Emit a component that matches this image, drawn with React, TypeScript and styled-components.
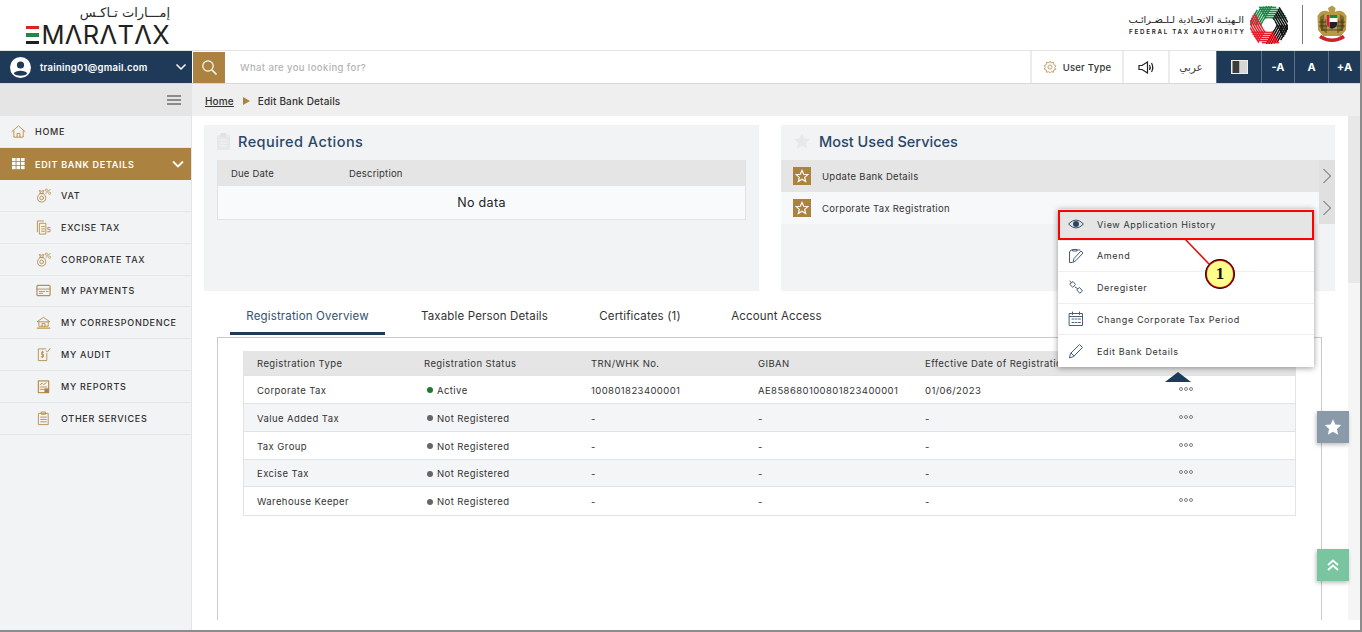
import React from 'react';
import styled, { createGlobalStyle } from 'styled-components';

const navy = '#1f3a58';
const gold = '#ab823f';
const font = `"Inter", "Liberation Sans", sans-serif`;

const Global = createGlobalStyle`
  html, body { margin: 0; padding: 0; height: 632px; overflow: hidden; background: #fff; }
  * { box-sizing: border-box; }
  body { font-family: ${font}; color: #2b2b2b; -webkit-font-smoothing: antialiased; }
`;

const Page = styled.div`
  position: relative; width: 1362px; height: 632px; overflow: hidden;
  border-right: 2px solid #8c8c8c; border-bottom: 2px solid #8c8c8c;
`;
const Header = styled.header`
  height: 51px; display: flex; justify-content: space-between; align-items: flex-start;
  border-bottom: 1px solid #e3e3e3; padding: 5px 13px 0 25px;
`;
const Brand = styled.div`display: flex; flex-direction: column; align-items: flex-end; width: 145px;`;
const BrandArabic = styled.div`
  font-family: "DejaVu Sans", sans-serif; font-size: 13px; line-height: 15px; color: #2b2b2b; direction: rtl;
`;
const BrandWord = styled.div`
  display: flex; align-items: center; height: 22px; margin-top: 4px; font-family: "Inter", sans-serif; font-weight: 400;
  font-size: 25.5px; line-height: 22px; letter-spacing: .35px; color: #231f20; white-space: nowrap;
`;
const BrandE = styled.span`
  display: inline-flex; flex-direction: column; justify-content: space-between; width: 13px; height: 19px; margin-right: 2px;
`;
const EBar = styled.i<{ $c: string }>`display: block; height: 3.4px; background: ${p => p.$c};`;
const Authority = styled.div`display: flex; align-items: center; height: 39px;`;
const AuthorityText = styled.div`display: flex; flex-direction: column; align-items: flex-end; margin-right: 6px; margin-top: 1px;`;
const AuthorityArabic = styled.div`font-family: "DejaVu Sans", sans-serif; font-size: 9.8px; font-weight: 400; line-height: 13px; color: #222; white-space: nowrap;`;
const AuthorityLatin = styled.div`font-size: 6.2px; font-weight: 600; letter-spacing: 1.75px; margin-right: -1.75px; line-height: 11px; color: #222; white-space: nowrap;`;
const Divider = styled.div`width: 1px; height: 39px; background: #777; margin: 0 14px;`;

const NavBar = styled.nav`height: 33px; display: flex; border-bottom: 1px solid #d8d8d8; background: #fff;`;
const UserBlock = styled.div`
  width: 192px; background: ${navy}; color: #fff; display: flex; align-items: center; padding: 0 5px 0 10px;
  font-size: 9.5px; font-weight: 600; letter-spacing: .25px;
`;
const UserAvatar = styled.span`display: flex; margin-right: 9px;`;
const UserName = styled.span`flex: 1;`;
const SearchBtn = styled.div`width: 32px; margin-left: 1px; margin-top: 1px; background: ${gold}; display: flex; align-items: center; justify-content: center;`;
const SearchText = styled.div`flex: 1; padding-left: 15px; display: flex; align-items: center; font-size: 9.5px; letter-spacing: .4px; color: #b4b4b4; font-weight: 500;`;
const NavItem = styled.div<{ $w: number }>`
  width: ${p => p.$w}px; display: flex; align-items: center; justify-content: center; gap: 6px; border-left: 2px solid #ececec;
  font-size: 9.5px; font-weight: 500; color: #333; letter-spacing: .25px;
`;
const ArabicLabel = styled.span`font-family: "DejaVu Sans", sans-serif; font-size: 10.5px; color: #444; padding-right: 4px;`;
const NavDark = styled.div<{ $w: number }>`
  width: ${p => p.$w}px; background: ${navy}; color: #fff; display: flex; align-items: center; justify-content: center;
  border-left: 1px solid #5c7186; font-size: 11px; font-weight: 700;
`;

const Body = styled.div`display: grid; grid-template-columns: 192px 1fr; height: 546px;`;
const Sidebar = styled.aside`background: #f2f3f5; border-right: 1px solid #e4e4e4;`;
const Burger = styled.div`height: 32px; background: #e5e5e5; display: flex; align-items: center; justify-content: flex-end; padding-right: 10px;`;
const MenuRow = styled.div`
  height: 32px; display: flex; align-items: center; padding-left: 11px; gap: 9px; font-size: 9px; font-weight: 500;
  letter-spacing: .72px; color: #2f2f2f; border-bottom: 1px solid #e6e7e9;
`;
const ActiveRow = styled(MenuRow)`
  background: ${gold}; color: #fff; font-weight: 600; border-bottom: none; padding-right: 6px; letter-spacing: .7px;
`;
const ActiveLabel = styled.span`flex: 1;`;
const SubRow = styled(MenuRow)`height: 31.85px; padding-left: 36px; gap: 10px;`;
const Ico = styled.span`display: flex; width: 15px; justify-content: center; flex: none;`;

const Main = styled.main`position: relative; background: #fff; display: flex; flex-direction: column;`;
const Crumbs = styled.div`
  height: 32px; background: #efefef; display: flex; align-items: center; padding: 1px 0 0 13px; font-size: 10px; color: #333;
  letter-spacing: .15px; font-weight: 500;
`;
const CrumbLink = styled.span`text-decoration: underline;`;
const CrumbArrow = styled.span`margin: 0 8px 0 9px; width: 0; height: 0; border-left: 7px solid ${gold}; border-top: 4px solid transparent; border-bottom: 4px solid transparent;`;
const Content = styled.div`flex: 1; display: flex; min-height: 0;`;
const Column = styled.div`width: 1156px; padding: 9px 0 0 12px; background: #fff;`;
const Scroll = styled.div`width: 12px; background: #f5f5f5; height: 504px;`;
const Thumb = styled.div`height: 167px; background: #e8e8e8;`;
const Panels = styled.div`display: grid; grid-template-columns: 555px 554px; column-gap: 22px;`;
const Panel = styled.section`height: 166px; background: #f2f3f5;`;
const PanelHead = styled.div<{ $pl: number; $ls: number }>`
  height: 35px; display: flex; align-items: center; gap: 8px; padding-left: ${p => p.$pl}px; padding-bottom: 3px;
  font-size: 14.5px; font-weight: 500; color: #2a4767; letter-spacing: ${p => p.$ls}px;
`;
const MiniTable = styled.div`margin: 0 13px; border: 1px solid #dfe2e6; border-top: none; background: #fff;`;
const MiniHead = styled.div`
  height: 26px; background: #e5e5e5; display: grid; grid-template-columns: 118px 1fr; align-items: center; padding: 1px 0 0 13px;
  font-size: 9.5px; letter-spacing: .2px; color: #333; font-weight: 400; border-bottom: 1px solid #dfe4ea;
`;
const NoData = styled.div`height: 33px; display: flex; align-items: center; justify-content: center; font-size: 12.5px; letter-spacing: .35px; font-weight: 400; color: #222; background: #f9fafb;`;
const Service = styled.div<{ $on?: boolean }>`
  height: 32px; display: flex; align-items: center; padding-left: 12px; gap: 11px; font-size: 9.5px; font-weight: 400; letter-spacing: .3px; color: #333;
  background: ${p => p.$on ? '#e5e5e5' : '#f7f8fa'};
`;
const ServiceStar = styled.span`width: 18px; height: 18px; background: ${gold}; display: flex; align-items: center; justify-content: center;`;
const ServiceLabel = styled.span`flex: 1;`;
const ServiceArrow = styled.span`width: 16px; height: 32px; background: #e0e0e0; display: flex; align-items: center; justify-content: center;`;

const Tabs = styled.div`display: flex; height: 46px; padding-left: 26px; align-items: flex-start;`;
const Tab = styled.div<{ $on?: boolean; $w: number }>`
  width: ${p => p.$w}px; height: 44px; padding-top: 8px; display: flex; align-items: center; justify-content: center;
  font-size: 11.5px; font-weight: 400; letter-spacing: .15px; color: ${p => p.$on ? '#34526f' : '#333'};
  border-bottom: 3px solid ${p => p.$on ? navy : 'transparent'};
`;
const Frame = styled.div`margin-left: 13px; width: 1105px; height: 283px; border: 1px solid #c9c9c9; border-bottom: none; padding: 13px 25px 0 25px;`;
const Grid = styled.div`border: 1px solid #e3e3e3; border-top: none;`;
const TRow = styled.div<{ $head?: boolean; $alt?: boolean; $h: number }>`
  height: ${p => p.$h}px; display: grid; grid-template-columns: 167px 167px 167px 167px 254px 1fr; align-items: center; padding: 1px 0 0 13px;
  font-size: 9.5px; letter-spacing: .42px; font-weight: 400; color: #333;
  background: ${p => p.$head ? '#e5e5e5' : p.$alt ? '#f4f5f7' : '#fff'};
  border-bottom: 1px solid #dfe2e6;
  &:last-child { border-bottom: none; }
`;
const Status = styled.span`display: flex; align-items: center; gap: 4px; padding-left: 3px;`;
const Dot = styled.i<{ $c: string }>`width: 6px; height: 6px; border-radius: 50%; background: ${p => p.$c};`;
const More = styled.span`display: flex; gap: 1px; padding-bottom: 3px;`;
const MoreDot = styled.i`width: 4px; height: 4px; border: 1px solid #808080; border-radius: 50%;`;

const Menu = styled.div`
  position: absolute; left: 1058px; top: 209px; width: 256px; background: #fff; box-shadow: 0 1px 6px rgba(0,0,0,.4); z-index: 5;
`;
const MenuItem = styled.div<{ $on?: boolean }>`
  height: 31.6px; display: flex; align-items: center; padding-left: 10px; gap: 13px; font-size: 9px; font-weight: 400; letter-spacing: .62px; color: #333;
  background: ${p => p.$on ? '#e5e5e5' : '#fff'}; border-bottom: 1px solid #eceef1;
  &:last-child { border-bottom: none; }
`;
const Pointer = styled.div`
  position: absolute; left: 1165px; top: 372px; width: 0; height: 0; z-index: 5;
  border-left: 13px solid transparent; border-right: 13px solid transparent; border-bottom: 10px solid ${navy};
`;
const Highlight = styled.div`position: absolute; left: 1058px; top: 210px; width: 256px; height: 30px; border: 2px solid #f00; z-index: 6;`;
const Leader = styled.svg`position: absolute; left: 1180px; top: 238px; z-index: 6;`;
const Callout = styled.div`
  position: absolute; left: 1205px; top: 259px; width: 30px; height: 30px; border-radius: 50%; background: #ffff8a; border: 2px solid #e01010;
  outline: 1px solid #111; outline-offset: -1px;
  display: flex; align-items: center; justify-content: center; font-family: "Liberation Serif", serif; font-size: 17px; font-weight: 700; color: #111; z-index: 7;
`;
const Float = styled.div<{ $top: number; $bg: string }>`
  position: absolute; left: 1317px; top: ${p => p.$top}px; width: 32px; height: 32px; background: ${p => p.$bg};
  box-shadow: -1px 2px 4px rgba(0,0,0,.25); display: flex; align-items: center; justify-content: center; z-index: 4;
`;

const stroke = { fill: 'none', stroke: '#b8924f', strokeWidth: 1, strokeLinecap: 'round' as const, strokeLinejoin: 'round' as const };
const I = ({ children, w = 15, h = 15, v = '0 0 16 16' }: { children: React.ReactNode; w?: number; h?: number; v?: string }) => (
  <Ico><svg width={w} height={h} viewBox={v}>{children}</svg></Ico>
);
const Bag = () => (
  <I>
    <g {...stroke}>
      <path d="M4 6 C.5 8.5 .5 15 6 15 S11.5 8.5 8 6 Z" />
      <path d="M3.8 3 L5 5.8 M8.2 3 L7 5.8 M3.8 3 Q6 4 8.2 3 M4 6 H8" />
      <circle cx="6" cy="10.6" r="2" />
      <path d="M10.5 6 L15 1.5" />
    </g>
    <circle cx="11" cy="2.2" r="1.2" fill="none" stroke="#b8924f" strokeWidth=".8" />
    <circle cx="14.6" cy="5.6" r="1.2" fill="none" stroke="#b8924f" strokeWidth=".8" />
  </I>
);
const Emblem = () => (
  <svg width="30" height="39" viewBox="0 0 30 39">
    <path d="M15 .5 L18.5 3 L18 7 C22 4.5 27 6 29.5 11 L29 25 L24 31 L6 31 L1 25 L.5 11 C3 6 8 4.5 12 7 L11 3 Z" fill="#b79a45" />
    <path d="M3 12 L7 9 L8 27 L3 23 Z M27 12 L23 9 L22 27 L27 23 Z" fill="#7d6a2c" />
    <path d="M2 17 H28 M2 21 H28 M4 25 H26 M5 14 V26 M9 14 V28 M21 14 V28 M25 14 V26" stroke="#3f3414" strokeWidth=".8" />
    <path d="M9.5 10 H20.5 V18 Q20.5 22 15 24 Q9.5 22 9.5 18 Z" fill="#fff" />
    <path d="M12.5 10 H20.5 V13 H12.5 Z" fill="#1c8a3e" />
    <path d="M12.5 17 H20.5 V18 Q20.5 22 15 24 L12.5 23 Z" fill="#222" />
    <path d="M9.5 10 H12.5 V23 Q9.5 21 9.5 18 Z" fill="#d2202a" />
    <path d="M4 30 Q15 37 26 30 L28 33 Q15 41 2 33 Z" fill="#c8242b" />
  </svg>
);
const ringStripes = [7.2, 9.3, 11.4, 13.5, 15.6, 17.6];
const Ring = () => {
  const segs = [
    { r: 300, c: '#1b8a46' }, { r: 0, c: '#1b8a46' }, { r: 60, c: '#111' }, { r: 120, c: '#111' }, { r: 180, c: '#e31e2d' }, { r: 240, c: '#e31e2d' },
  ];
  return (
    <svg width="38" height="38" viewBox="-19 -19 38 38">
      {segs.map(s => (
        <g key={s.r} transform={`rotate(${s.r})`} stroke={s.c} strokeWidth="1.5" fill="none">
          {ringStripes.map(r => (
            <path key={r} d={`M${(-r * 0.577).toFixed(2)} ${-r} L${Math.sqrt(361 - r * r).toFixed(2)} ${-r}`} />
          ))}
        </g>
      ))}
      <circle r="6.6" fill="#fff" />
    </svg>
  );
};
const StarLine = () => (
  <svg width="14" height="14" viewBox="0 0 24 24" fill="none" stroke="#fff" strokeWidth="2"><path d="M12 2.5 L14.9 9 L22 9.6 L16.6 14.3 L18.3 21.3 L12 17.5 L5.7 21.3 L7.4 14.3 L2 9.6 L9.1 9 Z" /></svg>
);
const Chevron = () => (
  <svg width="10" height="16" viewBox="0 0 10 16" fill="none" stroke="#555" strokeWidth="1"><path d="M1.5 1 L8.5 8 L1.5 15" /></svg>
);
const FilledStar = ({ s, c }: { s: number; c: string }) => (
  <svg width={s} height={s} viewBox="0 0 24 24" fill={c}><path d="M12 1.5 L15.2 8.6 L23 9.4 L17.2 14.6 L18.9 22.3 L12 18.3 L5.1 22.3 L6.8 14.6 L1 9.4 L8.8 8.6 Z" /></svg>
);

const rows = [
  { t: 'Corporate Tax', s: 'Active', c: '#1f7a2e', n: '100801823400001', g: 'AE858680100801823400001', d: '01/06/2023', h: 28 },
  { t: 'Value Added Tax', s: 'Not Registered', c: '#63666a', n: '-', g: '-', d: '-', h: 28 },
  { t: 'Tax Group', s: 'Not Registered', c: '#63666a', n: '-', g: '-', d: '-', h: 28 },
  { t: 'Excise Tax', s: 'Not Registered', c: '#63666a', n: '-', g: '-', d: '-', h: 27 },
  { t: 'Warehouse Keeper', s: 'Not Registered', c: '#63666a', n: '-', g: '-', d: '-', h: 28 },
];

const ms = { fill: 'none', stroke: '#4a5f75', strokeWidth: 1, strokeLinecap: 'round' as const, strokeLinejoin: 'round' as const };

export default function App() {
  return (
    <Page>
      <Global />
      <Header>
        <Brand>
          <BrandArabic>إمـــارات تـاكـس</BrandArabic>
          <BrandWord>
            <BrandE aria-hidden="true"><EBar $c="#e0202c" /><EBar $c="#1f8a46" /><EBar $c="#231f20" /></BrandE>
            MΛRΛTΛX
          </BrandWord>
        </Brand>
        <Authority>
          <AuthorityText>
            <AuthorityArabic>الـهيئـة الاتحـادية لـلـضـرائـب</AuthorityArabic>
            <AuthorityLatin>FEDERAL TAX AUTHORITY</AuthorityLatin>
          </AuthorityText>
          <Ring />
          <Divider />
          <Emblem />
        </Authority>
      </Header>
      <NavBar>
        <UserBlock>
          <UserAvatar>
            <svg width="21" height="21" viewBox="0 0 21 21"><circle cx="10.5" cy="10.5" r="10.5" fill="#fff" /><circle cx="10.5" cy="8" r="3.6" fill={navy} /><path d="M3.8 16.5 C5 12.8 16 12.8 17.2 16.5 C15 19.5 6 19.5 3.8 16.5 Z" fill={navy} /></svg>
          </UserAvatar>
          <UserName>training01@gmail.com</UserName>
          <svg width="12" height="8" viewBox="0 0 12 8" fill="none" stroke="#fff" strokeWidth="1.5"><path d="M1.5 1.5 L6 6 L10.5 1.5" /></svg>
        </UserBlock>
        <SearchBtn>
          <svg width="17" height="17" viewBox="0 0 17 17" fill="none" stroke="#fff" strokeWidth="1.2"><circle cx="7" cy="7" r="5.2" /><path d="M11 11 L15.5 15.5" strokeWidth="1.6" /></svg>
        </SearchBtn>
        <SearchText>What are you looking for?</SearchText>
        <NavItem $w={92}>
          <svg width="14" height="14" viewBox="0 0 24 24" fill="none" stroke="#b98a4d" strokeWidth="1.4"><circle cx="12" cy="12" r="3.5" /><path d="M12 2 L14 5 L18 4 L18.5 8 L22 10 L20 13 L22 16 L18.5 17 L18 21 L14 20 L12 22 L9.5 20 L6 21 L5.5 17 L2 15.5 L4 12.5 L2 9.5 L5.5 8 L6 4 L10 5 Z" strokeLinejoin="round" /></svg>
          User Type
        </NavItem>
        <NavItem $w={46}>
          <svg width="17" height="13" viewBox="0 0 17 13" fill="none" stroke="#222" strokeWidth="1.2"><path d="M1 4.5 H4 L9.5 1 V12 L4 8.5 H1 Z" /><path d="M11.5 4 Q13 6.5 11.5 9 M13.5 2 Q16 6.5 13.5 11" /></svg>
        </NavItem>
        <NavItem $w={48}><ArabicLabel>عربي</ArabicLabel></NavItem>
        <NavDark $w={45}>
          <svg width="17" height="14" viewBox="0 0 17 14"><rect width="17" height="14" fill="#eee" /><rect x="1.5" y="1" width="7" height="12" fill="#3c3c3c" /><rect x="8.5" y="1" width="7.5" height="12" fill="#d6d6d6" /></svg>
        </NavDark>
        <NavDark $w={33}>-A</NavDark>
        <NavDark $w={34}>A</NavDark>
        <NavDark $w={32}>+A</NavDark>
      </NavBar>
      <Body>
        <Sidebar>
          <Burger>
            <svg width="14" height="10" viewBox="0 0 14 10" stroke="#333" strokeWidth="1.2"><path d="M0 1 H14 M0 5 H14 M0 9 H14" /></svg>
          </Burger>
          <MenuRow>
            <I><g {...stroke}><path d="M1 8 L8 2 L15 8 M3 7 V14 H13 V7 M6.5 14 V10 H9.5 V14" /></g></I>
            HOME
          </MenuRow>
          <ActiveRow>
            <I w={13} h={12} v="0 0 13 12"><g fill="#fff">{[0, 4.5, 9].flatMap(x => [0, 4, 8].map(y => <rect key={`${x}-${y}`} x={x} y={y} width="3.6" height="3.2" />))}</g></I>
            <ActiveLabel>EDIT BANK DETAILS</ActiveLabel>
            <svg width="14" height="9" viewBox="0 0 14 9" fill="none" stroke="#fff" strokeWidth="1.8"><path d="M2 1.5 L7 6.5 L12 1.5" /></svg>
          </ActiveRow>
          <SubRow><Bag />VAT</SubRow>
          <SubRow><I><g {...stroke}><path d="M8 1 H1.5 V12.5 M4 3.5 H10.5 V15 H4 Z M6 7 H9 M6 9.5 H9 M6 12 H9" /><path d="M15 8 H12.5 V10 H15 V12.5 H12.5" /></g></I>EXCISE TAX</SubRow>
          <SubRow><Bag />CORPORATE TAX</SubRow>
          <SubRow><I><g {...stroke}><rect x="1" y="2.5" width="14" height="11" rx="1" strokeWidth="1.3" /><path d="M1 6.5 H15 M3.5 9 H9 M3.5 11 H7 M11 9 H13" /></g></I>MY PAYMENTS</SubRow>
          <SubRow><I><g {...stroke}><path d="M1.5 7 L8 2.5 L14.5 7 Z M3 7.5 V12 H13 V7.5 M6.5 12 V9 H9.5 V12" /><path d="M1.5 14 H14.5" strokeWidth="1.4" /></g></I>MY CORRESPONDENCE</SubRow>
          <SubRow><I><g {...stroke}><path d="M10.5 2 H2.5 V14.5 H11.5 V7" /><path d="M8 5.5 H6 V8 H8 V10.5 H5.5 M6.8 4.5 V11.5 M11 4 L12 5.5 L15 1.5" /></g></I>MY AUDIT</SubRow>
          <SubRow><I><g {...stroke}><rect x="2.5" y="2" width="11" height="12.5" strokeWidth="1.3" /><path d="M4.5 6 L6.5 4.5 L8 6 L11 4 M4.5 8.5 H11.5 M4.5 11 H9" /></g><rect x="9" y="10" width="4.5" height="4.5" fill={gold} /></I>MY REPORTS</SubRow>
          <SubRow><I><g {...stroke}><rect x="3" y="2.5" width="10" height="12" /><rect x="6" y="1" width="4" height="2.5" /><path d="M5 6.5 H11 M5 9 H11 M5 11.5 H11" /></g></I>OTHER SERVICES</SubRow>
        </Sidebar>
        <Main>
          <Crumbs>
            <CrumbLink>Home</CrumbLink>
            <CrumbArrow />
            Edit Bank Details
          </Crumbs>
          <Content>
            <Column>
              <Panels>
                <Panel>
                  <PanelHead $pl={13} $ls={0.45}>
                    <svg width="13" height="17" viewBox="0 0 13 17"><rect y="2" width="13" height="15" rx="1.5" fill="#e7e8ea" /><rect x="3.5" y="0" width="6" height="4" rx="1" fill="#e0e1e3" /><path d="M3 7 H10 M3 10 H10 M3 13 H10" stroke="#f4f4f4" /></svg>
                    Required Actions
                  </PanelHead>
                  <MiniTable>
                    <MiniHead><span>Due Date</span><span>Description</span></MiniHead>
                    <NoData>No data</NoData>
                  </MiniTable>
                </Panel>
                <Panel>
                  <PanelHead $pl={12} $ls={0}>
                    <FilledStar s={18} c="#e7e8ea" />
                    Most Used Services
                  </PanelHead>
                  <Service $on>
                    <ServiceStar><StarLine /></ServiceStar>
                    <ServiceLabel>Update Bank Details</ServiceLabel>
                    <ServiceArrow><Chevron /></ServiceArrow>
                  </Service>
                  <Service>
                    <ServiceStar><StarLine /></ServiceStar>
                    <ServiceLabel>Corporate Tax Registration</ServiceLabel>
                    <ServiceArrow><Chevron /></ServiceArrow>
                  </Service>
                </Panel>
              </Panels>
              <Tabs>
                <Tab $on $w={155}>Registration Overview</Tab>
                <Tab $w={199}>Taxable Person Details</Tab>
                <Tab $w={112}>Certificates (1)</Tab>
                <Tab $w={161}>Account Access</Tab>
              </Tabs>
              <Frame>
                <Grid>
                  <TRow $head $h={25}>
                    <span>Registration Type</span><span>Registration Status</span><span>TRN/WHK No.</span><span>GIBAN</span><span>Effective Date of Registration</span><span />
                  </TRow>
                  {rows.map((r, i) => (
                    <TRow key={r.t} $alt={i % 2 === 1} $h={r.h}>
                      <span>{r.t}</span>
                      <Status><Dot $c={r.c} />{r.s}</Status>
                      <span>{r.n}</span>
                      <span>{r.g}</span>
                      <span>{r.d}</span>
                      <More><MoreDot /><MoreDot /><MoreDot /></More>
                    </TRow>
                  ))}
                </Grid>
              </Frame>
            </Column>
            <Scroll><Thumb /></Scroll>
          </Content>
        </Main>
      </Body>

      <Menu>
        <MenuItem $on>
          <svg width="16" height="12" viewBox="0 0 16 12"><path d="M.5 6 Q8 -2 15.5 6 Q8 14 .5 6 Z" fill="none" stroke="#3b5168" /><circle cx="8" cy="6" r="3" fill="#2c4560" /></svg>
          View Application History
        </MenuItem>
        <MenuItem>
          <svg width="16" height="16" viewBox="0 0 16 16"><g {...ms}><path d="M5 2 H3 L1.5 4 V14.5 H4 M9 2 H12" /><path d="M5 14 L6 10.5 L13 3 L15 5 L8 12.5 Z" /><path d="M5 1.5 H9 V3 H5 Z" /></g></svg>
          Amend
        </MenuItem>
        <MenuItem>
          <svg width="16" height="14" viewBox="0 0 16 14"><g {...ms}><path d="M2 4 L5 1.5 L7.5 4.5 L5 7 Z M9 9.5 L11.5 7.5 L14.5 11 L12 13 Z" /><path d="M2 1 L3 2.5 M7 7 L9.5 8.5" /></g></svg>
          Deregister
        </MenuItem>
        <MenuItem>
          <svg width="16" height="16" viewBox="0 0 16 16"><g {...ms}><rect x="1.5" y="2.5" width="13" height="12" /><path d="M1.5 5.5 H14.5 M4.5 1 V3.5 M11.5 1 V3.5" /><path d="M4 8 H6 M7.5 8 H9 M10.5 8 H12.5 M4 11.5 H6 M7.5 11.5 H9 M10.5 11.5 H12.5" /></g></svg>
          Change Corporate Tax Period
        </MenuItem>
        <MenuItem>
          <svg width="16" height="16" viewBox="0 0 16 16"><g {...ms}><path d="M1.5 14.5 L2.5 10.5 L11.5 1.5 L14.5 4.5 L5.5 13.5 Z M3 10 L6 13" /></g></svg>
          Edit Bank Details
        </MenuItem>
      </Menu>
      <Pointer />
      <Highlight />
      <Leader width="32" height="30" viewBox="0 0 32 30"><path d="M5 1 L29 26" stroke="#e01010" strokeWidth="1.6" /></Leader>
      <Callout>1</Callout>
      <Float $top={411} $bg="#8a9aab"><FilledStar s={18} c="#fff" /></Float>
      <Float $top={549} $bg="#78c5a0">
        <svg width="16" height="16" viewBox="0 0 16 16" fill="none" stroke="#fff" strokeWidth="1.8"><path d="M3 8 L8 3.5 L13 8 M3 13 L8 8.5 L13 13" /></svg>
      </Float>
    </Page>
  );
}
